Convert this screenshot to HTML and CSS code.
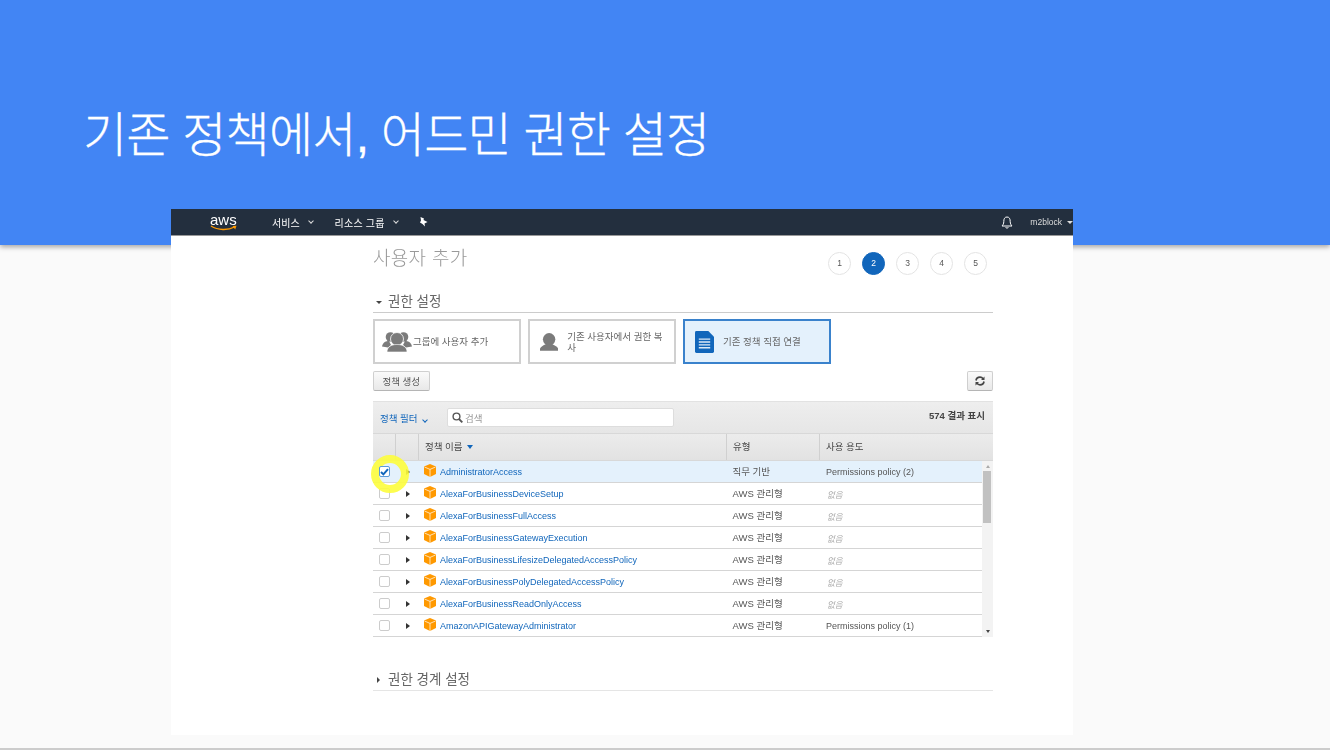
FILE: index.html
```html
<!DOCTYPE html>
<html lang="ko">
<head>
  <meta charset="UTF-8">
  <title>기존 정책에서, 어드민 권한 설정</title>
  <link rel="stylesheet" href="styles.css">
</head>
<body>
  <svg class="defs" width="0" height="0">
    <symbol id="box" viewBox="0 0 12 13">
      <path d="M6 0 12 2.6V10L6 13 0 10V2.6Z" fill="#f90"/>
      <path d="M0.5 3 6 5.4 11.5 3M6 5.4V13" fill="none" stroke="#fff" stroke-width="0.7"/>
    </symbol>
  </svg>

  <!-- === SLIDE HEADER === -->
  <header class="slide-head">
    <h1>기존 정책에서, 어드민 권한 설정</h1>
  </header>

  <!-- === SCREENSHOT ON THE SLIDE === -->
  <section class="shot">
    <nav class="topbar">
      <div class="aws-logo">
        <span>aws</span>
        <svg width="28" height="6" viewBox="0 0 28 6"><path d="M1 1C8 5.500 18 5.500 24.500 2" fill="none" stroke="#f90" stroke-width="1.400"/><path d="M22.500 1 26.500 0.800 25.200 4.500Z" fill="#f90"/></svg>
      </div>
      <a class="top-link top-first">서비스 <i class="chev"></i></a>
      <a class="top-link top-second">리소스 그룹 <i class="chev"></i></a>
      <svg class="pin" width="10" height="10" viewBox="0 0 10 10"><path d="M2.500 0 6 1.500 5.500 3 9.500 5 6.500 6.500 7 9.500 4.500 7 2 5.500 3 3.500Z" fill="#fff"/></svg>
      <svg class="bell" width="12" height="13" viewBox="0 0 12 13"><path d="M6 1C3.500 1 2.800 3 2.800 5.500 2.800 8 1.800 9 1 10H11C10.200 9 9.200 8 9.200 5.500 9.200 3 8.500 1 6 1ZM4.700 11.200C5 12.500 7 12.500 7.300 11.200" fill="none" stroke="#fff"/></svg>
      <span class="user">m2block</span>
      <i class="caret-down user-caret"></i>
    </nav>

    <div class="content">
      <div class="page-head">
        <h2>사용자 추가</h2>
        <ol class="steps">
          <li>1</li>
          <li class="on">2</li>
          <li>3</li>
          <li>4</li>
          <li>5</li>
        </ol>
      </div>

      <div class="sec-head"><i class="caret-down"></i>권한 설정</div>

      <div class="cards">
        <div class="card">
          <svg class="ic-group" width="30" height="20" viewBox="0 0 30 20">
            <g fill="#7b7b7b">
              <circle cx="8.500" cy="5" r="4.800"/><circle cx="21.500" cy="5" r="4.800"/>
              <path d="M0 14.500C1 10 4 9 7 9L9 13 6 15.500Z"/><path d="M30 14.500C29 10 26 9 23 9L21 13 24 15.500Z"/>
              <circle cx="15" cy="7" r="6.500" stroke="#fff" stroke-width="0.800"/>
              <path d="M5 20C5 15 9 12.500 15 12.500S25 15 25 20Z" stroke="#fff" stroke-width="0.600"/>
            </g>
          </svg>
          <span>그룹에 사용자 추가</span>
        </div>
        <div class="card card-copy">
          <svg width="19" height="20" viewBox="0 0 20 20"><g fill="#7b7b7b"><circle cx="10" cy="7" r="6.800"/><path d="M0 19.500V18C0 15 5 13.500 7 12H13C15 13.500 20 15 20 18V19.500Z"/></g></svg>
          <span>기존 사용자에서 권한 복사</span>
        </div>
        <div class="card card-on">
          <svg width="19" height="22" viewBox="0 0 20 23"><path d="M1.500 0H14L20 6V21.500Q20 23 18.500 23H1.500Q0 23 0 21.500V1.500Q0 0 1.500 0Z" fill="#1166bb"/><path d="M4 8.500H16M4 11.500H16M4 14.500H16M4 17.500H16" stroke="#dbe9f7" stroke-width="1.500"/></svg>
          <span>기존 정책 직접 연결</span>
        </div>
      </div>

      <div class="actions">
        <button class="btn">정책 생성</button>
        <button class="btn btn-icon">
          <svg width="10" height="10" viewBox="0 0 10 10"><path d="M1 4.500C1.300 2.500 3 1.200 5 1.200 6.300 1.200 7.400 1.800 8.100 2.700M9 5.500C8.700 7.500 7 8.800 5 8.800 3.700 8.800 2.600 8.200 1.900 7.300" fill="none" stroke="#444" stroke-width="1.700"/><path d="M9.500 0.500V4H6ZM0.500 9.500V6H4Z" fill="#444"/></svg>
        </button>
      </div>

      <div class="policy">
        <div class="toolbar">
          <a class="filter">정책 필터 <i class="chev chev-blue"></i></a>
          <label class="search">
            <svg width="11" height="11" viewBox="0 0 11 11"><circle cx="4.500" cy="4.500" r="3.400" fill="none" stroke="#555" stroke-width="1.400"/><path d="M7 7 10.300 10.300" stroke="#555" stroke-width="1.800"/></svg>
            <span>검색</span>
          </label>
          <span class="count"><b>574</b> 결과 표시</span>
        </div>

        <div class="thead">
          <div class="th"></div>
          <div class="th"></div>
          <div class="th th-name">정책 이름 <i class="sort"></i></div>
          <div class="th">유형</div>
          <div class="th">사용 용도</div>
        </div>

        <div class="tbody">
          <div class="rows">
            <div class="row row-on">
              <span class="cb cb-on"><svg width="9" height="8" viewBox="0 0 9 8"><path d="M1 4 3.400 6.400 8 1.200" fill="none" stroke="#1166bb" stroke-width="2"/></svg></span>
              <i class="tri"></i>
              <span class="name"><svg class="box" width="12" height="13"><use href="#box"/></svg><a>AdministratorAccess</a></span>
              <span>직무 기반</span>
              <span>Permissions policy (2)</span>
            </div>
            <div class="row">
              <span class="cb"></span><i class="tri"></i>
              <span class="name"><svg class="box" width="12" height="13"><use href="#box"/></svg><a>AlexaForBusinessDeviceSetup</a></span>
              <span>AWS 관리형</span><em>없음</em>
            </div>
            <div class="row">
              <span class="cb"></span><i class="tri"></i>
              <span class="name"><svg class="box" width="12" height="13"><use href="#box"/></svg><a>AlexaForBusinessFullAccess</a></span>
              <span>AWS 관리형</span><em>없음</em>
            </div>
            <div class="row">
              <span class="cb"></span><i class="tri"></i>
              <span class="name"><svg class="box" width="12" height="13"><use href="#box"/></svg><a>AlexaForBusinessGatewayExecution</a></span>
              <span>AWS 관리형</span><em>없음</em>
            </div>
            <div class="row">
              <span class="cb"></span><i class="tri"></i>
              <span class="name"><svg class="box" width="12" height="13"><use href="#box"/></svg><a>AlexaForBusinessLifesizeDelegatedAccessPolicy</a></span>
              <span>AWS 관리형</span><em>없음</em>
            </div>
            <div class="row">
              <span class="cb"></span><i class="tri"></i>
              <span class="name"><svg class="box" width="12" height="13"><use href="#box"/></svg><a>AlexaForBusinessPolyDelegatedAccessPolicy</a></span>
              <span>AWS 관리형</span><em>없음</em>
            </div>
            <div class="row">
              <span class="cb"></span><i class="tri"></i>
              <span class="name"><svg class="box" width="12" height="13"><use href="#box"/></svg><a>AlexaForBusinessReadOnlyAccess</a></span>
              <span>AWS 관리형</span><em>없음</em>
            </div>
            <div class="row">
              <span class="cb"></span><i class="tri"></i>
              <span class="name"><svg class="box" width="12" height="13"><use href="#box"/></svg><a>AmazonAPIGatewayAdministrator</a></span>
              <span>AWS 관리형</span>
              <span>Permissions policy (1)</span>
            </div>
          </div>
          <div class="scrollbar">
            <i class="arrow-up"></i>
            <div class="thumb"></div>
            <i class="arrow-down"></i>
          </div>
          <div class="highlight"></div>
        </div>
      </div>

      <div class="sec-head sec-closed"><i class="caret-right"></i>권한 경계 설정</div>
    </div>
  </section>
</body>
</html>
```

FILE: styles.css
```css
:root {
  --blue: #4285f4;
  --aws-blue: #1166bb;
  --text: #555555;
  --line: #d5d5d5;
  --kr: "Liberation Sans", "Noto Sans CJK KR", sans-serif;
}

* {
  box-sizing: border-box;
}

html, body {
  height: 100%;
}

body {
  margin: 0;
  height: 750px;
  overflow: hidden;
  position: relative;
  background: #fafafa;
  border-bottom: 2px solid #cccccc;
  font-family: var(--kr);
  color: var(--text);
}

.defs {
  position: absolute;
}

i {
  display: inline-block;
  font-style: normal;
}

/* === SLIDE HEADER === */
.slide-head {
  height: 245px;
  padding: 102px 0 0 83px;
  background: var(--blue);
  box-shadow: 0 2px 5px rgba(0, 0, 0, 0.35);
}

.slide-head h1 {
  margin: 0;
  color: #ffffff;
  font-size: 48px;
  font-weight: 300;
  letter-spacing: -0.8px;
  line-height: 68px;
  white-space: nowrap;
  -webkit-text-stroke: 0.3px #ffffff;
}

/* === SCREENSHOT === */
.shot {
  position: absolute;
  left: 171px;
  top: 209px;
  width: 902px;
  height: 526px;
  background: #ffffff;
}

.topbar,
.content {
  filter: blur(0.3px);
}

.topbar {
  height: 27px;
  display: flex;
  align-items: center;
  background: #232f3e;
  border-bottom: 1px solid #999999;
  color: #ffffff;
  font-size: 10px;
}

.aws-logo {
  width: 28px;
  margin-left: 39px;
  display: flex;
  flex-direction: column;
  color: #ffffff;
  font-size: 15px;
  line-height: 11px;
}

.aws-logo svg {
  display: block;
}

.top-link {
  display: flex;
  align-items: center;
  gap: 9px;
}

.top-first {
  margin-left: 34px;
}

.top-second {
  margin-left: 22px;
  letter-spacing: 0.2px;
}

.chev {
  width: 4px;
  height: 4px;
  margin-top: -2px;
  border-right: 1px solid #dddddd;
  border-bottom: 1px solid #dddddd;
  transform: rotate(45deg);
}

.pin {
  margin-left: 20px;
}

.bell {
  margin-left: auto;
  margin-right: 17px;
}

.user {
  color: #dddddd;
  font-size: 8.500px;
}

.caret-down {
  width: 0;
  height: 0;
  margin: 0 6px 0 3px;
  vertical-align: middle;
  border: 3px solid transparent;
  border-top: 3px solid #444444;
  border-bottom: 0;
}

.user-caret {
  margin: 0 0 0 5px;
  border-top-color: #dddddd;
}

.caret-right {
  width: 0;
  height: 0;
  margin: 0 8px 0 4px;
  vertical-align: middle;
  border: 3px solid transparent;
  border-left: 3px solid #444444;
  border-right: 0;
}

/* === CONTENT COLUMN === */
.content {
  width: 620px;
  margin-left: 202px;
}

.page-head {
  height: 56px;
  display: flex;
  justify-content: space-between;
  padding: 10px 6px 0 0;
}

.page-head h2 {
  margin: 0;
  color: #999999;
  font-size: 19px;
  font-weight: 300;
  letter-spacing: 0.3px;
  line-height: 25px;
}

.steps {
  list-style: none;
  display: flex;
  gap: 11px;
  margin: 6px 0 0;
  padding: 0;
}

.steps li {
  width: 23px;
  height: 23px;
  border: 1px solid #e3e3e3;
  border-radius: 50%;
  font-size: 8.500px;
  line-height: 21px;
  text-align: center;
}

.steps .on {
  background: var(--aws-blue);
  border-color: var(--aws-blue);
  color: #ffffff;
}

.sec-head {
  height: 21px;
  border-bottom: 1px solid #cccccc;
  color: #666666;
  font-size: 13.500px;
  line-height: 20px;
}

.cards {
  display: flex;
  gap: 7px;
  margin-top: 6px;
}

.card {
  width: 148px;
  height: 45px;
  display: flex;
  align-items: center;
  gap: 1px;
  padding: 0 7px;
  border: 2px solid #d0d0d0;
  color: #666666;
  font-size: 9.500px;
  line-height: 11px;
}

.card-copy {
  gap: 9px;
  padding-left: 10px;
}

.card-on {
  gap: 9px;
  padding-left: 10px;
  background: #e4f1fc;
  border-color: #3a82cc;
}

.actions {
  display: flex;
  justify-content: space-between;
  margin-top: 7px;
}

.btn {
  height: 20px;
  padding: 0 8.500px;
  border: 1px solid #cfcfcf;
  border-bottom-color: #b5b5b5;
  border-radius: 2px;
  background: linear-gradient(#fafafa, #e8e8e8);
  color: #555555;
  font-family: var(--kr);
  font-size: 9.500px;
}

.btn-icon {
  width: 26px;
  padding: 0;
  display: flex;
  align-items: center;
  justify-content: center;
}

/* === POLICY TABLE === */
.policy {
  margin-top: 10px;
}

.toolbar {
  height: 32px;
  display: flex;
  align-items: center;
  padding: 0 8px 0 7px;
  background: linear-gradient(#eeeeee, #e6e6e6);
  border-top: 1px solid #e2e2e2;
  font-size: 9.500px;
}

.filter {
  width: 67px;
  color: #1166bb;
}

.chev-blue {
  margin-left: 3px;
  border-color: #1166bb;
}

.search {
  width: 227px;
  height: 19px;
  display: flex;
  align-items: center;
  gap: 2px;
  padding-left: 4px;
  background: #ffffff;
  border: 1px solid #dddddd;
  border-radius: 2px;
  color: #999999;
}

.count {
  margin: -6px 0 0 auto;
  color: #444444;
  font-size: 9.500px;
  font-weight: 700;
}

.thead {
  height: 28px;
  display: grid;
  grid-template-columns: 23px 23px 308px 93px 1fr;
  background: linear-gradient(#ececec, #e2e2e2);
  border-top: 1px solid #d8d8d8;
  border-bottom: 1px solid #d8d8d8;
  font-size: 9.500px;
}

.th {
  padding-left: 6px;
  border-right: 1px solid #d0d0d0;
  line-height: 26px;
  color: #444444;
}

.th:last-child {
  border-right: 0;
}

.sort {
  width: 0;
  height: 0;
  margin-left: 2px;
  vertical-align: middle;
  border: 3.500px solid transparent;
  border-top: 4px solid var(--aws-blue);
  border-bottom: 0;
}

.tbody {
  display: flex;
  position: relative;
}

.rows {
  flex: 1;
}

.row {
  height: 22px;
  display: grid;
  grid-template-columns: 23px 23px 308px 93px 1fr;
  align-items: center;
  border-bottom: 1px solid var(--line);
  font-size: 9px;
}

.row > span:nth-child(n+4),
.row > em {
  padding-left: 6px;
}

.row > span:nth-child(4) {
  padding: 0 0 2px 5.500px;
  font-size: 9.500px;
}

.row em {
  padding-left: 7px;
  color: #aaaaaa;
  font-size: 8.500px;
  font-style: italic;
}

.row-on {
  background: #e4f1fc;
}

.cb {
  width: 11px;
  height: 11px;
  margin-left: 6px;
  display: flex;
  align-items: center;
  justify-content: center;
  background: #ffffff;
  border: 1px solid #cccccc;
  border-radius: 2px;
}

.cb-on {
  position: relative;
  z-index: 1;
  border-color: #5b9bd8;
}

.tri {
  width: 0;
  height: 0;
  margin-left: 10px;
  border: 3px solid transparent;
  border-left: 4px solid #333333;
  border-right: 0;
}

.name {
  display: flex;
  align-items: center;
  gap: 4px;
  padding-left: 5px;
}

.box {
  margin-top: -3px;
}

.name a {
  color: #1166bb;
}

/* === SCROLLBAR === */
.scrollbar {
  width: 11px;
  display: flex;
  flex-direction: column;
  align-items: center;
  background: #f3f3f3;
}

.arrow-up,
.arrow-down {
  width: 0;
  height: 0;
  border: 2.500px solid transparent;
}

.arrow-up {
  margin: 4px 0 3px;
  border-bottom: 3px solid #aaaaaa;
  border-top: 0;
}

.thumb {
  width: 8px;
  height: 52px;
  margin-right: 2px;
  background: #c1c1c1;
}

.arrow-down {
  margin: auto 0 4px;
  border-top: 3px solid #444444;
  border-bottom: 0;
}

/* sits over the first checkbox */
.highlight {
  position: absolute;
  left: -2px;
  top: -6px;
  width: 38px;
  height: 38px;
  border: 8px solid #fdfd3c;
  border-radius: 50%;
  opacity: 0.9;
}

.sec-closed {
  height: 23px;
  margin-top: 31px;
  border-bottom-color: #e5e5e5;
  line-height: 23px;
}
```
